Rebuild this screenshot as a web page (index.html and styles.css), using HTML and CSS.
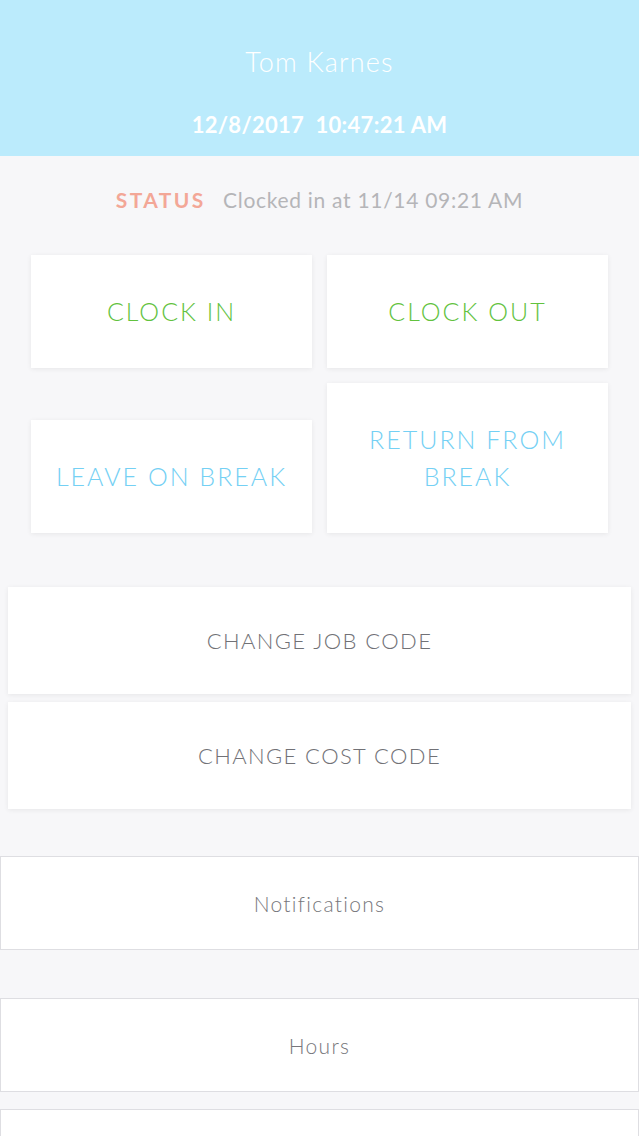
FILE: index.html
```html
<!DOCTYPE html>
<html lang="en">
<head>
  <meta charset="UTF-8">
  <title>Time Clock - Tom Karnes</title>
  <link rel="stylesheet" href="styles.css">
</head>
<body>

  <!-- header -->
  <div class="header">
    <div class="user-name">Tom Karnes</div>
    <div class="clock-now">12/8/2017&nbsp; 10:47:21 AM</div>
  </div>

  <!-- status -->
  <div class="status">
    <span class="status-label">STATUS</span>
    <span class="status-text">Clocked in at 11/14 09:21 AM</span>
  </div>

  <!-- punch buttons -->
  <div class="punch-grid">
    <div class="punch green">CLOCK IN</div>
    <div class="punch green">CLOCK OUT</div>
    <div class="punch blue">LEAVE ON BREAK</div>
    <div class="punch blue">RETURN FROM<br>BREAK</div>
  </div>

  <!-- code buttons -->
  <div class="code-list">
    <div class="code-btn">CHANGE JOB CODE</div>
    <div class="code-btn">CHANGE COST CODE</div>
  </div>

  <!-- menu -->
  <div class="menu">
    <div class="menu-item">Notifications</div>
    <div class="menu-item">Hours</div>
    <div class="menu-item"></div>
  </div>

</body>
</html>
```

FILE: styles.css
```css
body {
  margin: 0;
  font-family: 'Lato', 'Open Sans', sans-serif;
  background-color: #f7f7f9;
  overflow: hidden;
  height: 1136px;
}

.header {
  background: #bbebfc;
  height: 156px;
  box-sizing: border-box;
  padding-top: 46px;
  text-align: center;
  color: #fff;
}

.user-name {
  font-size: 27px;
  font-weight: 300;
  line-height: 32px;
  letter-spacing: 1.2px;
}

.clock-now {
  margin-top: 34px;
  font-size: 22px;
  font-weight: bold;
  line-height: 26px;
  letter-spacing: 0.3px;
}

.status {
  margin-top: 31px;
  text-align: center;
  font-size: 21px;
  line-height: 26px;
}

.status-label {
  color: #f3a797;
  font-weight: bold;
  letter-spacing: 2.4px;
  margin-right: 12px;
}

.status-text {
  color: #b5b5b8;
  letter-spacing: 0.7px;
}

.punch-grid {
  margin: 42px 31px 0;
  display: flex;
  flex-wrap: wrap;
  align-items: flex-end;
  gap: 15px;
}

.punch {
  width: calc(50% - 7.5px);
  box-sizing: border-box;
  padding: 38px 10px;
  background: #fff;
  text-align: center;
  font-size: 25px;
  font-weight: 300;
  line-height: 37px;
  letter-spacing: 2px;
  box-shadow: 0 1px 5px rgba(0, 0, 0, 0.07);
}

.punch.green { color: #62c23e; }
.punch.blue { color: #74d0f4; }

.code-list {
  margin: 54px 8px 0;
  display: flex;
  flex-direction: column;
  gap: 8px;
}

.code-btn {
  height: 107px;
  display: flex;
  align-items: center;
  justify-content: center;
  background: #fff;
  color: #717176;
  font-size: 22px;
  font-weight: 300;
  letter-spacing: 1.4px;
  box-shadow: 0 1px 5px rgba(0, 0, 0, 0.07);
}

.menu {
  margin-top: 47px;
}

.menu-item {
  height: 94px;
  box-sizing: border-box;
  border: 1px solid #dedee2;
  background: #fff;
  display: flex;
  align-items: center;
  justify-content: center;
  color: #77777c;
  font-size: 21px;
  font-weight: 300;
  letter-spacing: 1.3px;
  margin-bottom: 48px;
}

.menu-item:nth-child(2) {
  margin-bottom: 17px;
}
```
